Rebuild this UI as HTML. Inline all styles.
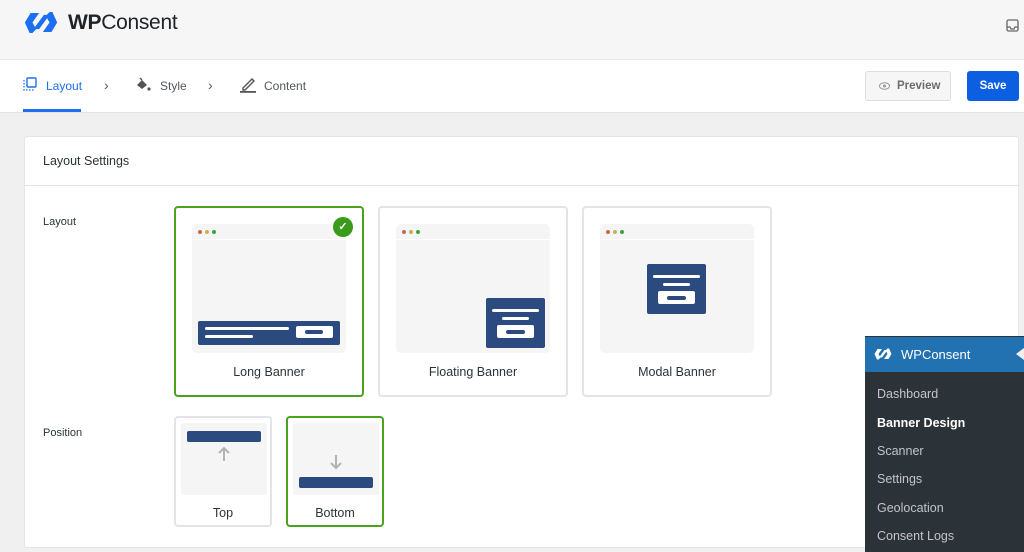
<!DOCTYPE html>
<html><head><meta charset="utf-8"><style>
*{box-sizing:border-box;margin:0;padding:0}
body{width:1024px;height:552px;overflow:hidden;background:#f0f0f1;font-family:"Liberation Sans",sans-serif;position:relative;color:#2c3338}
.abs{position:absolute}
.top{left:0;top:0;width:1024px;height:60px;background:#f6f6f6;border-bottom:1px solid #e6e6e6}
.tabs{left:0;top:60px;width:1024px;height:53px;background:#fff;border-bottom:1px solid #e2e4e7}
.tab{font-size:12px;color:#50575e;top:79px}
.card{left:24px;top:136px;width:995px;height:412px;background:#fff;border:1px solid #e5e5e5;border-radius:3px}
.opt{border:2px solid #e2e4e7;border-radius:4px;background:#fff}
.opt.sel{border-color:#4aa21e}
.lbl{font-size:12.5px;color:#2c3338;text-align:center;width:100%;position:absolute}
.prev{position:absolute;background:#f5f5f5;border-radius:5px;overflow:hidden}
.bar{height:16px;border-bottom:1.5px solid #fff;position:relative}
.d{position:absolute;top:6px;width:4px;height:4px;border-radius:2px}
.navy{background:#2b4a80;position:absolute;border-radius:2px}
.w{background:#fff;position:absolute;border-radius:2px}
.side{left:865px;top:336px;width:159px;height:216px;background:#2c3338}
.si{position:absolute;left:12px;font-size:12.5px;color:#c3c4c7}
</style></head><body>
<div class="abs top"></div>
<svg class="abs" style="left:22px;top:9px" width="38" height="27" viewBox="0 0 40 26">
<path d="M3 13 L9 3 H18 L11 13 L15 20 L11 24 H8 Z" fill="#1c6ff0"/>
<path d="M37 13 L31 23 H22 L29 13 L25 6 L29 2 H32 Z" fill="#1c6ff0"/>
<path d="M12 20 L23 5 H29 L18 20 Z" fill="#1c6ff0"/>
</svg>
<div class="abs" style="left:68px;top:11px;font-size:21px;color:#1d2327;font-weight:bold;letter-spacing:-0.3px">WP<span style="font-weight:normal">Consent</span></div>
<svg class="abs" style="left:1006px;top:19px" width="13" height="13" viewBox="0 0 13 13"><rect x="1" y="1" width="11" height="11" rx="1.5" fill="none" stroke="#666" stroke-width="1.3"/><path d="M1 8h3l1 2h3l1-2h3" fill="none" stroke="#666" stroke-width="1.2"/></svg>
<div class="abs tabs"></div>
<div class="abs" style="left:23px;top:109px;width:58px;height:3px;background:#1c6ff0"></div>
<svg class="abs" style="left:23px;top:77px" width="14" height="14" viewBox="0 0 14 14"><rect x="4" y="1" width="9" height="9" rx="1" fill="none" stroke="#1c6ff0" stroke-width="1.4"/><path d="M1 3v10h10" fill="none" stroke="#1c6ff0" stroke-width="1.2" stroke-dasharray="1.5 1.5"/></svg>
<div class="abs tab" style="left:46px;color:#1c6ff0">Layout</div>
<div class="abs tab" style="left:104px;font-size:14px;top:77px">›</div>
<svg class="abs" style="left:135px;top:77px" width="17" height="15" viewBox="0 0 17 15"><path d="M2 8 L7 3 L12 8 L7 12 Z" fill="#555"/><path d="M5 1 L7 3" stroke="#555" stroke-width="1.4"/><circle cx="14" cy="12" r="1.6" fill="#555"/></svg>
<div class="abs tab" style="left:160px">Style</div>
<div class="abs tab" style="left:208px;font-size:14px;top:77px">›</div>
<svg class="abs" style="left:240px;top:76px" width="17" height="17" viewBox="0 0 17 17"><path d="M3 12 L12 3 L14 5 L5 14 H3 Z" fill="none" stroke="#555" stroke-width="1.4"/><rect x="0" y="15" width="16" height="1.8" fill="#555"/></svg>
<div class="abs tab" style="left:264px">Content</div>
<div class="abs" style="left:865px;top:71px;width:86px;height:30px;border:1px solid #ddd;border-radius:3px;background:#f6f6f6;font-size:11.5px;font-weight:bold;color:#6b6b6b;line-height:28px;padding-left:31px">Preview</div>
<svg class="abs" style="left:879px;top:82px" width="11" height="8" viewBox="0 0 11 8"><ellipse cx="5.5" cy="4" rx="5" ry="3.3" fill="none" stroke="#999" stroke-width="1"/><circle cx="5.5" cy="4" r="1.5" fill="#999"/></svg>
<div class="abs" style="left:967px;top:71px;width:52px;height:30px;background:#0b5fe0;border-radius:3px;color:#fff;font-size:11.5px;font-weight:bold;text-align:center;line-height:30px">Save</div>

<div class="abs card"></div>
<div class="abs" style="left:24px;top:185px;width:995px;height:1px;background:#e5e5e5"></div>
<div class="abs" style="left:43px;top:154px;font-size:12.5px;color:#2c3338">Layout Settings</div>
<div class="abs" style="left:43px;top:216px;font-size:11px">Layout</div>
<div class="abs" style="left:43px;top:427px;font-size:11px">Position</div>

<div class="abs opt sel" style="left:174px;top:206px;width:190px;height:191px">
 <div class="prev" style="left:16px;top:16px;width:154px;height:129px"><div class="bar"><i class="d" style="left:6px;background:#c8684f"></i><i class="d" style="left:13px;background:#c9b14c"></i><i class="d" style="left:20px;background:#3aa33a"></i></div>
  <div class="navy" style="left:6px;top:97px;width:142px;height:24px"><i class="w" style="left:7px;top:6px;width:84px;height:2.5px"></i><i class="w" style="left:7px;top:14px;width:48px;height:2.5px"></i><i class="w" style="left:98px;top:5px;width:37px;height:12px;border-radius:2px"></i><i class="navy" style="left:107px;top:9px;width:18px;height:4px;border-radius:2px"></i></div></div>
 <div class="lbl" style="top:157px">Long Banner</div>
</div>
<div class="abs" style="left:333px;top:217px;width:20px;height:20px;border-radius:10px;background:#3a9a1a;color:#fff;font-size:11px;text-align:center;line-height:20px;font-weight:bold">✓</div>
<div class="abs opt" style="left:378px;top:206px;width:190px;height:191px">
 <div class="prev" style="left:16px;top:16px;width:154px;height:129px"><div class="bar"><i class="d" style="left:6px;background:#c8684f"></i><i class="d" style="left:13px;background:#c9b14c"></i><i class="d" style="left:20px;background:#3aa33a"></i></div>
  <div class="navy" style="left:90px;top:74px;width:59px;height:50px"><i class="w" style="left:6px;top:11px;width:47px;height:2.5px"></i><i class="w" style="left:16px;top:19px;width:27px;height:2.5px"></i><i class="w" style="left:11px;top:27px;width:37px;height:13px"></i><i class="navy" style="left:20px;top:32px;width:19px;height:4px"></i></div></div>
 <div class="lbl" style="top:157px">Floating Banner</div>
</div>
<div class="abs opt" style="left:582px;top:206px;width:190px;height:191px">
 <div class="prev" style="left:16px;top:16px;width:154px;height:129px"><div class="bar"><i class="d" style="left:6px;background:#c8684f"></i><i class="d" style="left:13px;background:#c9b14c"></i><i class="d" style="left:20px;background:#3aa33a"></i></div>
  <div class="navy" style="left:47px;top:40px;width:59px;height:50px"><i class="w" style="left:6px;top:11px;width:47px;height:2.5px"></i><i class="w" style="left:16px;top:19px;width:27px;height:2.5px"></i><i class="w" style="left:11px;top:27px;width:37px;height:13px"></i><i class="navy" style="left:20px;top:32px;width:19px;height:4px"></i></div></div>
 <div class="lbl" style="top:157px">Modal Banner</div>
</div>
<div class="abs opt" style="left:174px;top:416px;width:98px;height:111px">
 <div class="prev" style="left:5px;top:5px;width:86px;height:72px;border-radius:3px"><div class="navy" style="left:6px;top:8px;width:74px;height:11px"></div>
 <svg style="position:absolute;left:37px;top:23px" width="12" height="16" viewBox="0 0 12 16"><path d="M6 15V2M1 7l5-5 5 5" fill="none" stroke="#b0b4ba" stroke-width="2"/></svg></div>
 <div class="lbl" style="top:88px">Top</div>
</div>
<div class="abs opt sel" style="left:286px;top:416px;width:98px;height:111px">
 <div class="prev" style="left:5px;top:5px;width:86px;height:72px;border-radius:3px">
 <svg style="position:absolute;left:37px;top:31px" width="12" height="16" viewBox="0 0 12 16"><path d="M6 1v13M1 9l5 5 5-5" fill="none" stroke="#b0b4ba" stroke-width="2"/></svg><div class="navy" style="left:6px;top:54px;width:74px;height:11px"></div></div>
 <div class="lbl" style="top:88px">Bottom</div>
</div>

<div class="abs side">
 <div style="position:absolute;left:0;top:1px;width:159px;height:35px;background:#2271b1"></div>
 <svg style="position:absolute;left:8px;top:11px" width="20" height="14" viewBox="0 0 40 26"><path d="M3 13 L9 3 H18 L11 13 L15 20 L11 24 H8 Z" fill="#fff"/><path d="M37 13 L31 23 H22 L29 13 L25 6 L29 2 H32 Z" fill="#fff"/><path d="M12 20 L23 5 H29 L18 20 Z" fill="#fff"/></svg>
 <div style="position:absolute;left:36px;top:11px;font-size:13px;color:#fff">WPConsent</div>
 <div style="position:absolute;left:151px;top:12px;width:0;height:0;border-top:6px solid transparent;border-bottom:6px solid transparent;border-right:8px solid #f0f0f1"></div>
 <div class="si" style="top:51px">Dashboard</div>
 <div class="si" style="top:80px;color:#fff;font-weight:bold">Banner Design</div>
 <div class="si" style="top:108px">Scanner</div>
 <div class="si" style="top:136px">Settings</div>
 <div class="si" style="top:165px">Geolocation</div>
 <div class="si" style="top:193px">Consent Logs</div>
</div>
</body></html>
